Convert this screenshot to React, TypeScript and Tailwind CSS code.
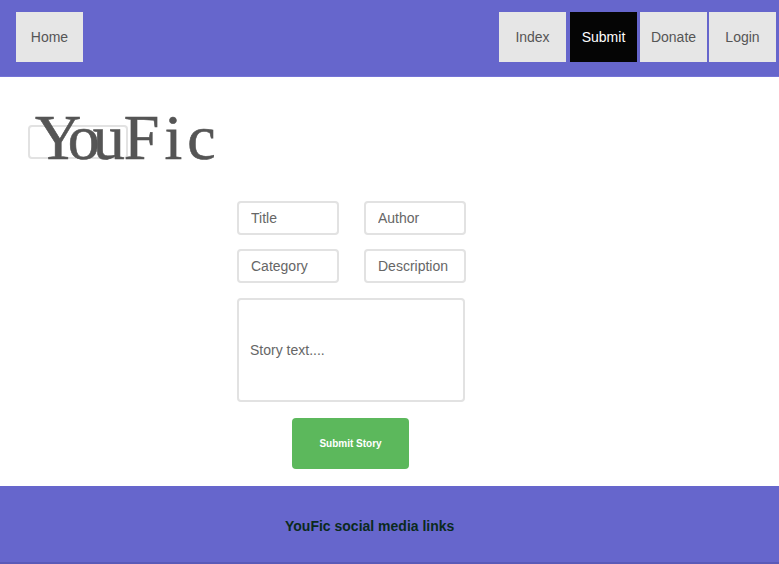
export default function App() {
  const navItems = [
    { label: 'Index', cls: 'ml-0 bg-[#e6e6e6] text-[#555]' },
    { label: 'Submit', cls: 'ml-[4px] bg-[#050505] text-white' },
    { label: 'Donate', cls: 'ml-[3px] bg-[#e6e6e6] text-[#555]' },
    { label: 'Login', cls: 'ml-[2px] bg-[#e6e6e6] text-[#555]' },
  ];

  const inputCls =
    'h-[34px] w-[102px] rounded border-2 border-[#e2e2e2] pl-3 text-sm text-[#555] placeholder:text-[#666] outline-none';

  return (
    <div className="flex min-h-[564px] w-full flex-col bg-white font-['Liberation_Sans',Arial,sans-serif]">
      {/* Top navigation */}
      <header className="flex h-[77px] items-start justify-between border-b border-[#7474d6] bg-[#6666cc] pt-3 pl-4 pr-[3px]">
        <a className="flex h-[50px] w-[67px] items-center justify-center bg-[#e6e6e6] text-sm text-[#555]">
          Home
        </a>
        <nav className="flex">
          {navItems.map((item) => (
            <a
              key={item.label}
              className={`flex h-[50px] w-[67px] items-center justify-center text-sm ${item.cls}`}
            >
              {item.label}
            </a>
          ))}
        </nav>
      </header>

      {/* Title */}
      <main className="flex flex-1 flex-col">
        <div className="relative h-[124px] pl-[35px]">
          <input className="absolute top-[48px] left-[28px] h-[34px] w-[100px] rounded border-2 border-[#e2e2e2]" />
          <h1 className="relative pt-[29px] font-['Liberation_Serif','Times_New_Roman',serif] text-[64px] leading-[1] text-[#555] [-webkit-text-stroke:0.6px_#555]">
            <span className="tracking-[-7px]">You</span>
            <span className="ml-[6px] tracking-[5px]">Fic</span>
          </h1>
        </div>

        {/* Submit form */}
        <form className="ml-[237px] flex w-[229px] flex-col">
          <div className="grid grid-cols-2 gap-x-[25px] gap-y-[14px]">
            <input placeholder="Title" className={inputCls} />
            <input placeholder="Author" className={inputCls} />
            <input placeholder="Category" className={inputCls} />
            <input placeholder="Description" className={inputCls} />
          </div>
          <div className="mt-[15px] flex h-[104px] w-[228px] items-center rounded border-2 border-[#e2e2e2] pl-[11px] text-sm text-[#666]">
            Story text....
          </div>
          <button
            type="button"
            className="mt-4 ml-[55px] h-[51px] w-[117px] rounded-sm bg-[#5cb85c] text-[10px] font-bold text-white"
          >
            Submit Story
          </button>
        </form>
      </main>

      {/* Footer */}
      <footer className="mt-[17px] flex h-[78px] items-center border-b-2 border-[#5a5ab8] bg-[#6666cc] pt-[3px] pl-[285px]">
        <p className="text-sm font-bold text-[#0b2a1c]">YouFic social media links</p>
      </footer>
    </div>
  );
}
